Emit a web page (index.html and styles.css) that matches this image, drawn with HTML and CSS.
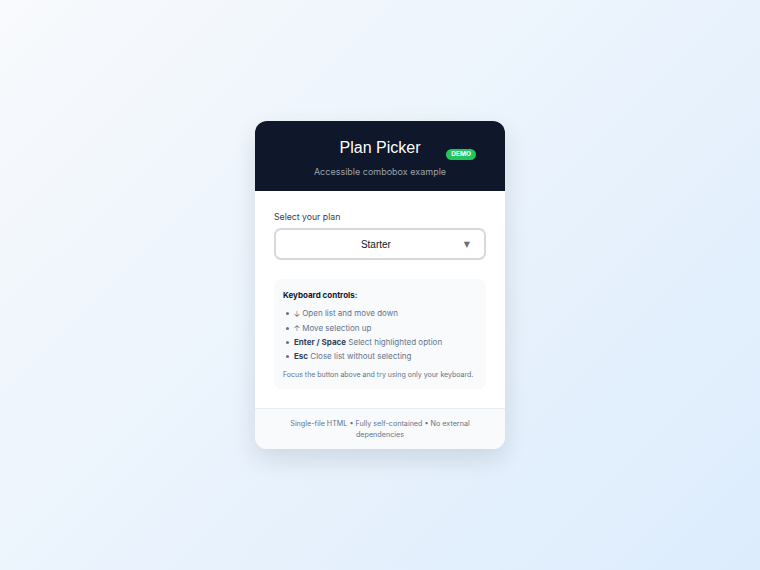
FILE: index.html
```html
<!DOCTYPE html>
<html lang="en">
<head>
    <meta charset="UTF-8">
    <meta name="viewport" content="width=device-width, initial-scale=1.0">
    <link rel="stylesheet" href="styles.css">
    <title>Plan Picker</title>
</head>
<body>
    <div class="card">
        <header class="card-header">
            <h1>Plan Picker</h1>
            <p>Accessible combobox example</p>
            <span class="badge">DEMO</span>
        </header>

        <main class="card-body">
            <label class="field-label" id="plan-label">Select your plan</label>
            <button class="combo" type="button" aria-haspopup="listbox" aria-labelledby="plan-label">
                <span class="combo-value">Starter</span>
                <span class="combo-arrow">&#9660;</span>
            </button>

            <div class="help">
                <h2>Keyboard controls:</h2>
                <ul>
                    <li><span class="key">&#129123;</span> Open list and move down</li>
                    <li><span class="key">&#129121;</span> Move selection up</li>
                    <li><strong>Enter / Space</strong> Select highlighted option</li>
                    <li><strong>Esc</strong> Close list without selecting</li>
                </ul>
                <p class="note">Focus the button above and try using only your keyboard.</p>
            </div>
        </main>

        <footer class="card-footer">
            Single-file HTML &bull; Fully self-contained &bull; No external dependencies
        </footer>
    </div>
</body>
</html>
```

FILE: styles.css
```css
body {
    font-family: Inter, 'Noto Sans', sans-serif;
    margin: 0;
    padding: 0;
    min-height: 100vh;
    display: flex;
    align-items: center;
    justify-content: center;
    background: linear-gradient(135deg, #f8fafc 0%, #dcecfd 100%);
}

.card {
    width: 250px;
    background-color: #fff;
    border-radius: 12px;
    overflow: hidden;
    box-shadow: 0 10px 25px rgba(15, 23, 42, 0.12);
}

.card-header {
    position: relative;
    background-color: #0f172a;
    color: #fff;
    text-align: center;
    padding: 16px 20px 13px;
}

.card-header h1 {
    font-family: 'Liberation Sans', Arial, sans-serif;
    font-size: 16px;
    font-weight: normal;
    line-height: 22px;
    margin: 0;
}

.card-header p {
    margin: 6px 0 0;
    font-size: 9px;
    line-height: 13px;
    color: #9ca3af;
}

.badge {
    position: absolute;
    top: 28px;
    right: 29px;
    background-color: #22c55e;
    color: #fff;
    font-size: 6.5px;
    font-weight: 700;
    line-height: 11px;
    padding: 0 5px;
    border-radius: 6px;
}

.card-body {
    display: block;
    padding: 20px 19px 19px;
}

.field-label {
    display: block;
    font-size: 8.7px;
    line-height: 12px;
    color: #334155;
    margin-bottom: 5px;
}

.combo {
    display: flex;
    align-items: center;
    width: 100%;
    height: 32px;
    padding: 0 14px 0 12px;
    background-color: #fff;
    border: 2px solid #d6d9de;
    border-radius: 7px;
    font-family: 'Liberation Sans', Arial, sans-serif;
    font-size: 10px;
    color: #111827;
    cursor: pointer;
}

.combo-value {
    flex: 1;
    text-align: center;
}

.combo-arrow {
    font-family: 'DejaVu Sans', sans-serif;
    font-size: 8px;
    color: #6b7280;
}

.help {
    margin-top: 19px;
    background-color: #f8fafc;
    border-radius: 7px;
    padding: 10px 9px 9px;
}

.help h2 {
    margin: 0;
    font-size: 8px;
    line-height: 12px;
    font-weight: 700;
    color: #0f172a;
}

.help ul {
    margin: 5px 0 5px;
    padding-left: 11px;
    list-style: none;
}

.help li {
    position: relative;
    height: 14.3px;
    font-size: 8px;
    line-height: 14.3px;
    color: #64748b;
}

.help li::before {
    content: '';
    position: absolute;
    left: -8px;
    top: 6px;
    width: 3px;
    height: 3px;
    border-radius: 50%;
    background-color: #64748b;
}

.help strong {
    color: #334155;
    font-weight: 700;
}

.key {
    font-family: 'DejaVu Sans', sans-serif;
    font-size: 8px;
    line-height: 1;
    color: #475569;
}

.note {
    margin: 0;
    font-size: 7px;
    line-height: 11px;
    color: #64748b;
}

.card-footer {
    background-color: #f8fafc;
    border-top: 1px solid #e8edf3;
    padding: 9px 28px 9px;
    text-align: center;
    font-size: 7.2px;
    line-height: 11px;
    color: #64748b;
}
```
